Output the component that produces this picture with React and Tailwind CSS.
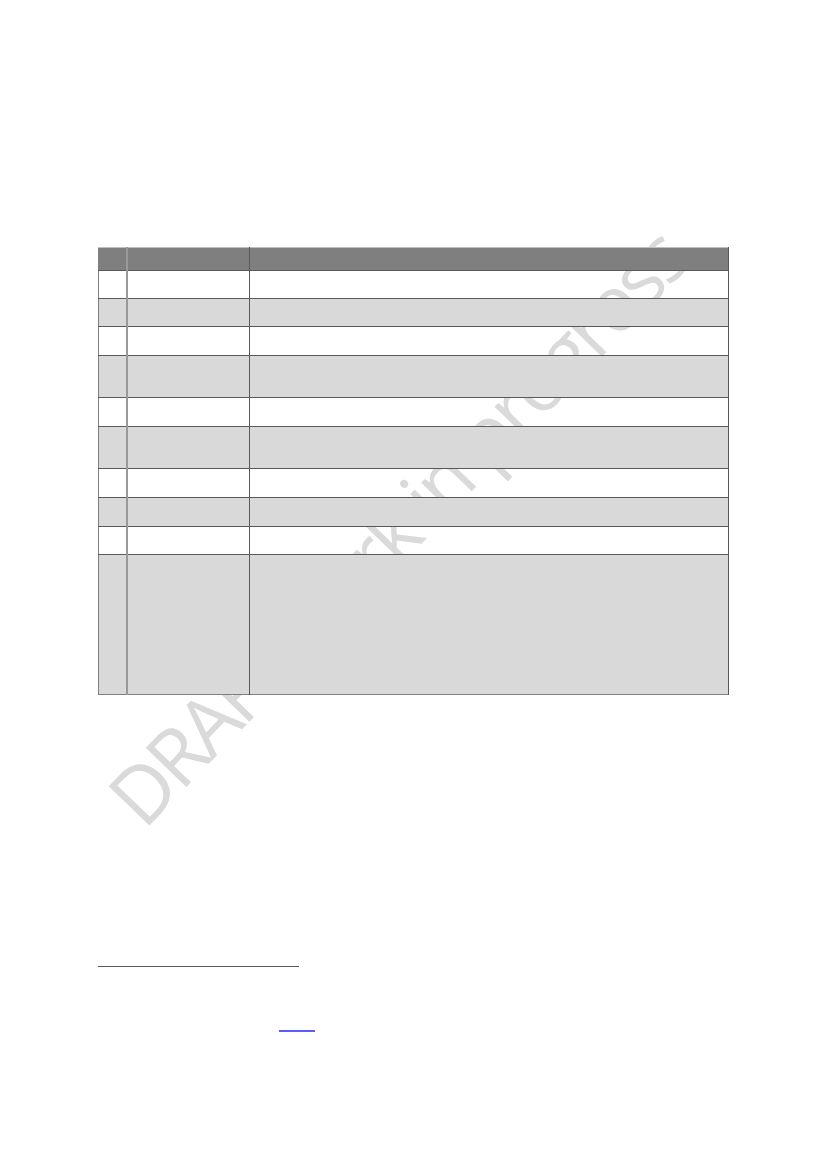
const rows = [
  { h: "h-[28px]", gray: false },
  { h: "h-[28px]", gray: true },
  { h: "h-[29px]", gray: false },
  { h: "h-[42px]", gray: true },
  { h: "h-[29px]", gray: false },
  { h: "h-[42px]", gray: true },
  { h: "h-[29px]", gray: false },
  { h: "h-[29px]", gray: true },
  { h: "h-[28px]", gray: false },
  { h: "h-[140px]", gray: true },
];

function Watermark() {
  return (
    <div className="absolute left-[396px] top-[526px] z-0 pointer-events-none select-none">
      <div className="-translate-x-1/2 -translate-y-1/2 -rotate-[46deg] whitespace-nowrap text-[79px] leading-none font-medium tracking-[-0.05em] text-[#dadada] font-['Open_Sans',sans-serif]">
        DRAFT work in progress
      </div>
    </div>
  );
}

export default function App() {
  return (
    <div className="relative h-[1169px] w-[827px] overflow-hidden bg-white font-['Liberation_Sans',Arial,sans-serif]">
      <Watermark />
      <div className="relative z-10 pt-[247px] pl-[98px]">
        <table className="table-fixed w-[630px] border-collapse border border-[#7f7f7f]">
          <colgroup>
            <col className="w-[28px]" />
            <col className="w-[123px]" />
            <col className="w-[479px]" />
          </colgroup>
          <thead>
            <tr className="h-[23px] bg-[#7f7f7f] border-t border-[#bfbfbf]">
              <th className="border-r-2 border-[#999999]"></th>
              <th className="border-r border-[#595959]"></th>
              <th className="border-r border-[#595959]"></th>
            </tr>
          </thead>
          <tbody>
            {rows.map((row, i) => (
              <tr key={i} className={`${row.h} ${row.gray ? "bg-[#d9d9d9]" : "bg-transparent"} border-t border-[#595959]`}>
                <td className="border-r-2 border-[#999999]"></td>
                <td className="border-r border-[#595959]"></td>
                <td className="border-r border-[#595959]"></td>
              </tr>
            ))}
          </tbody>
        </table>

        <div className="mt-[271px] w-[201px] h-px bg-[#595959]"></div>
        <div className="mt-[63px] ml-[181px] w-[36px] border-b-2 border-[#5b5bff] h-px"></div>
      </div>
    </div>
  );
}
